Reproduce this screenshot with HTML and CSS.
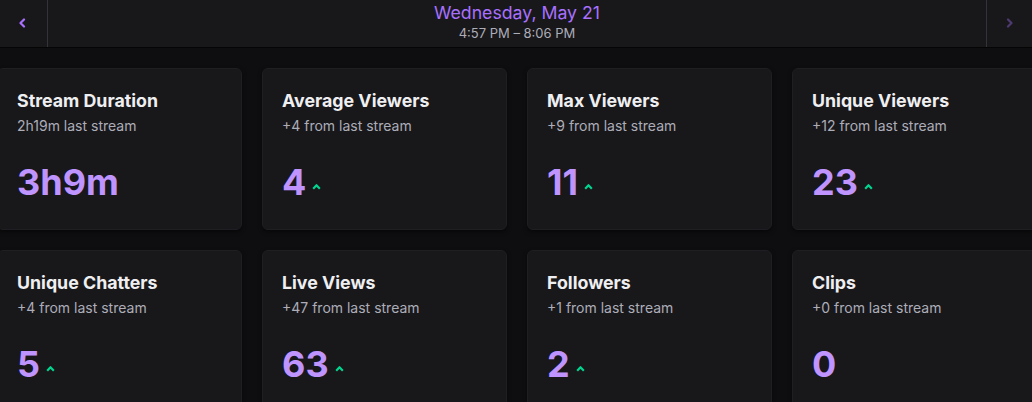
FILE: index.html
```html
<!DOCTYPE html>
<html lang="en">

<head>
    <meta charset="UTF-8">
    <meta name="viewport" content="width=device-width, initial-scale=1.0">
    <title>Stream Stats</title>
    <link rel="stylesheet" href="styles.css">
</head>

<body>
    <header class="day-nav">
        <button class="nav-btn" aria-label="Previous day">
            <svg width="8" height="10" viewBox="0 0 8 10"><path d="M6 1.5 2.5 5 6 8.5" fill="none" stroke="currentColor" stroke-width="2.2" stroke-linecap="round" stroke-linejoin="round"/></svg>
        </button>
        <div class="day-label">
            <div class="day-title">Wednesday, May 21</div>
            <div class="day-range">4:57 PM – 8:06 PM</div>
        </div>
        <button class="nav-btn nav-btn-off" aria-label="Next day">
            <svg width="8" height="10" viewBox="0 0 8 10"><path d="M2 1.5 5.5 5 2 8.5" fill="none" stroke="currentColor" stroke-width="2.2" stroke-linecap="round" stroke-linejoin="round"/></svg>
        </button>
    </header>

    <main class="stats-grid">
        <div class="stat-card">
            <div class="stat-title">Stream Duration</div>
            <div class="stat-sub">2h19m last stream</div>
            <div class="stat-value">3h9m</div>
        </div>
        <div class="stat-card">
            <div class="stat-title">Average Viewers</div>
            <div class="stat-sub">+4 from last stream</div>
            <div class="stat-value">4 <svg class="up" width="9" height="7" viewBox="0 0 9 7"><path d="M1.2 5.8 4.5 2.2 7.8 5.8" fill="none" stroke="currentColor" stroke-width="2.1" stroke-linejoin="round"/></svg></div>
        </div>
        <div class="stat-card">
            <div class="stat-title">Max Viewers</div>
            <div class="stat-sub">+9 from last stream</div>
            <div class="stat-value">11 <svg class="up" width="9" height="7" viewBox="0 0 9 7"><path d="M1.2 5.8 4.5 2.2 7.8 5.8" fill="none" stroke="currentColor" stroke-width="2.1" stroke-linejoin="round"/></svg></div>
        </div>
        <div class="stat-card">
            <div class="stat-title">Unique Viewers</div>
            <div class="stat-sub">+12 from last stream</div>
            <div class="stat-value">23 <svg class="up" width="9" height="7" viewBox="0 0 9 7"><path d="M1.2 5.8 4.5 2.2 7.8 5.8" fill="none" stroke="currentColor" stroke-width="2.1" stroke-linejoin="round"/></svg></div>
        </div>
        <div class="stat-card">
            <div class="stat-title">Unique Chatters</div>
            <div class="stat-sub">+4 from last stream</div>
            <div class="stat-value">5 <svg class="up" width="9" height="7" viewBox="0 0 9 7"><path d="M1.2 5.8 4.5 2.2 7.8 5.8" fill="none" stroke="currentColor" stroke-width="2.1" stroke-linejoin="round"/></svg></div>
        </div>
        <div class="stat-card">
            <div class="stat-title">Live Views</div>
            <div class="stat-sub">+47 from last stream</div>
            <div class="stat-value">63 <svg class="up" width="9" height="7" viewBox="0 0 9 7"><path d="M1.2 5.8 4.5 2.2 7.8 5.8" fill="none" stroke="currentColor" stroke-width="2.1" stroke-linejoin="round"/></svg></div>
        </div>
        <div class="stat-card">
            <div class="stat-title">Followers</div>
            <div class="stat-sub">+1 from last stream</div>
            <div class="stat-value">2 <svg class="up" width="9" height="7" viewBox="0 0 9 7"><path d="M1.2 5.8 4.5 2.2 7.8 5.8" fill="none" stroke="currentColor" stroke-width="2.1" stroke-linejoin="round"/></svg></div>
        </div>
        <div class="stat-card">
            <div class="stat-title">Clips</div>
            <div class="stat-sub">+0 from last stream</div>
            <div class="stat-value">0</div>
        </div>
    </main>
</body>

</html>
```

FILE: styles.css
```css
* {
    box-sizing: border-box;
}

body {
    margin: 0;
    background-color: #0e0e10;
    font-family: Inter, "Noto Sans", sans-serif;
    color: #efeff1;
    overflow: hidden;
}

.day-nav {
    display: flex;
    height: 48px;
    background-color: #18181b;
    border-bottom: 1px solid #050506;
}

.nav-btn {
    width: 48px;
    display: flex;
    align-items: center;
    justify-content: center;
    padding: 0 3px 2px 0;
    background: none;
    border: none;
    border-right: 1px solid #343438;
    color: #a970ff;
    cursor: pointer;
}

.nav-btn-off {
    width: 46px;
    padding: 0 0 2px 0;
    border-right: none;
    border-left: 1px solid #343438;
    color: #4d3a70;
}

.day-label {
    flex: 1;
    text-align: center;
    padding-top: 2px;
}

.day-title {
    font-size: 17.7px;
    line-height: 22px;
    color: #a970ff;
}

.day-range {
    font-size: 13px;
    line-height: 18px;
    color: #adadb8;
}

.stats-grid {
    display: grid;
    grid-template-columns: repeat(4, 245px);
    gap: 20px;
    margin: 20px 0 0 -3px;
}

.stat-card {
    height: 162px;
    padding: 20px 20px 20px 19px;
    background-color: #18181b;
    border: 1px solid #1f1f23;
    border-radius: 6px;
    box-shadow: 0 2px 4px rgba(0, 0, 0, 0.5);
}

.stat-title {
    font-size: 17.8px;
    font-weight: 700;
    line-height: 24px;
}

.stat-sub {
    margin-top: 3px;
    font-size: 14px;
    line-height: 20px;
    color: #adadb8;
}

.stat-value {
    margin-top: 24px;
    font-size: 36px;
    font-weight: 700;
    line-height: 44px;
    color: #bf94ff;
    display: flex;
    align-items: center;
    gap: 6px;
}

.up {
    color: #00d68f;
    margin-top: 8px;
}
```
